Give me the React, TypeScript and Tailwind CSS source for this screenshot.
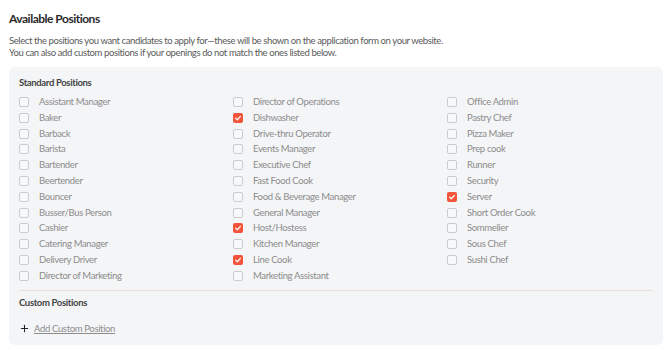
import { Plus } from "lucide-react"

const columns: { label: string; checked?: boolean }[][] = [
  [
    { label: "Assistant Manager" },
    { label: "Baker" },
    { label: "Barback" },
    { label: "Barista" },
    { label: "Bartender" },
    { label: "Beertender" },
    { label: "Bouncer" },
    { label: "Busser/Bus Person" },
    { label: "Cashier" },
    { label: "Catering Manager" },
    { label: "Delivery Driver" },
    { label: "Director of Marketing" },
  ],
  [
    { label: "Director of Operations" },
    { label: "Dishwasher", checked: true },
    { label: "Drive-thru Operator" },
    { label: "Events Manager" },
    { label: "Executive Chef" },
    { label: "Fast Food Cook" },
    { label: "Food & Beverage Manager" },
    { label: "General Manager" },
    { label: "Host/Hostess", checked: true },
    { label: "Kitchen Manager" },
    { label: "Line Cook", checked: true },
    { label: "Marketing Assistant" },
  ],
  [
    { label: "Office Admin" },
    { label: "Pastry Chef" },
    { label: "Pizza Maker" },
    { label: "Prep cook" },
    { label: "Runner" },
    { label: "Security" },
    { label: "Server", checked: true },
    { label: "Short Order Cook" },
    { label: "Sommelier" },
    { label: "Sous Chef" },
    { label: "Sushi Chef" },
  ],
]

function Checkbox({ checked }: { checked?: boolean }) {
  if (checked) {
    return (
      <span className="w-[10px] h-[10px] rounded-[2px] bg-[#f1543b] flex items-center justify-center shrink-0">
        <svg viewBox="0 0 10 10" className="w-[8px] h-[8px]">
          <path d="M2 5.2 L4.1 7.2 L8 3" fill="none" stroke="#fff" strokeWidth="1.6" strokeLinecap="round" strokeLinejoin="round" />
        </svg>
      </span>
    )
  }
  return <span className="w-[10px] h-[10px] rounded-[2px] border border-[#c9cbce] bg-[#f7f8f9] shrink-0" />
}

export default function App() {
  return (
    <div className="w-[670px] h-[351px] bg-white px-[9px] pt-[11px] font-['Lato','Liberation_Sans',sans-serif]">
      <h1 className="text-[12px] tracking-[-0.5px] font-bold text-[#2a2a2a] leading-[16px]">Available Positions</h1>
      <p className="mt-[8px] text-[9.5px] tracking-[-0.4px] leading-[12px] text-[#5a5a5a]">
        Select the positions you want candidates to apply for—these will be shown on the application form on your website.
        <br />
        You can also add custom positions if your openings do not match the ones listed below.
      </p>

      <div className="mt-[8px] w-[654px] h-[278px] bg-[#f4f5f7] rounded-[6px] px-[10px] pt-[10px]">
        <h2 className="text-[9.5px] tracking-[-0.35px] font-bold text-[#444] leading-[12px]">Standard Positions</h2>
        <div className="mt-[5px] grid grid-cols-[214px_214px_1fr]">
          {columns.map((col, i) => (
            <div key={i} className="flex flex-col">
              {col.map((item) => (
                <div key={item.label} className="h-[15.82px] flex items-center gap-[10px]">
                  <Checkbox checked={item.checked} />
                  <span className="text-[9.5px] tracking-[-0.35px] text-[#8c8c8c] leading-[12px] whitespace-nowrap">{item.label}</span>
                </div>
              ))}
            </div>
          ))}
        </div>
        <div className="mt-[6px] h-px bg-[#f0ddd6]" />
        <h2 className="mt-[6px] text-[9.5px] tracking-[-0.35px] font-bold text-[#444] leading-[12px]">Custom Positions</h2>
        <button className="mt-[14px] flex items-center gap-[4px]">
          <Plus className="w-[11px] h-[11px] text-[#222]" strokeWidth={2.2} />
          <span className="text-[9.5px] tracking-[-0.35px] text-[#8c8c8c] underline leading-[12px]">Add Custom Position</span>
        </button>
      </div>
    </div>
  )
}
